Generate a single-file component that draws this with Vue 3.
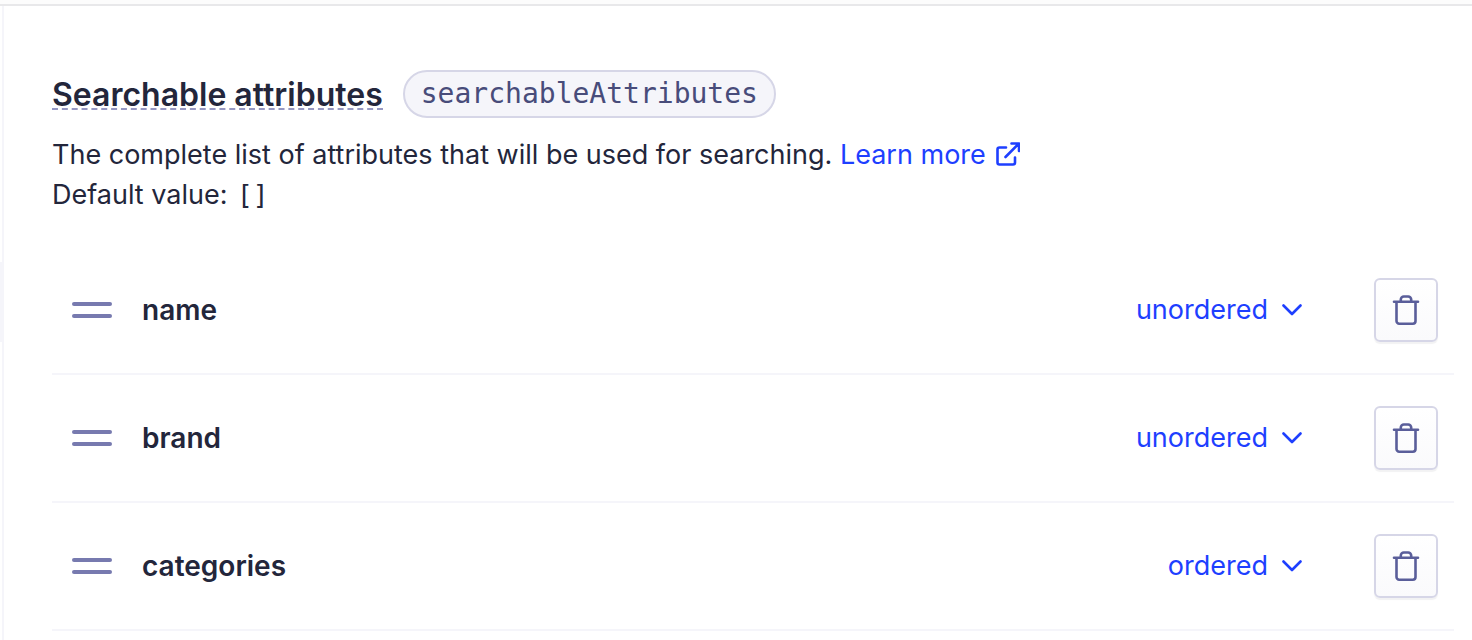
<script setup>
import { ref } from 'vue'

const attributes = ref([
  { name: 'name', order: 'unordered' },
  { name: 'brand', order: 'unordered' },
  { name: 'categories', order: 'ordered' },
])

function remove(index) {
  attributes.value.splice(index, 1)
}
</script>

<template>
  <div class="page">
    <div class="topbar"></div>
    <div class="body">
      <div class="rail"><div class="rail-active"></div></div>
      <main class="panel">
        <header class="heading">
          <h2 class="title">Searchable attributes</h2>
          <code class="pill">searchableAttributes</code>
        </header>
        <p class="description">
          The complete list of attributes that will be used for searching.
          <a class="link" href="#learn-more">Learn more<svg class="external" viewBox="0 0 24 24" aria-hidden="true">
            <path d="M10 5.500H3.500a2 2 0 0 0-2 2v13a2 2 0 0 0 2 2h13.500a2 2 0 0 0 2-2V15.500M15.500 1.500h7.500v7.500M22.500 2 9.500 15" />
          </svg></a>
        </p>
        <p class="description">Default value: <code class="value">[]</code></p>

        <ul class="list">
          <li v-for="(attribute, index) in attributes" :key="attribute.name" class="row">
            <button class="handle" type="button" :aria-label="`Move ${attribute.name}`">
              <span class="bar"></span>
              <span class="bar"></span>
            </button>
            <label class="name" :for="`order-${attribute.name}`">{{ attribute.name }}</label>
            <div class="order">
              <select :id="`order-${attribute.name}`" v-model="attribute.order" class="select">
                <option>unordered</option>
                <option>ordered</option>
              </select>
              <svg class="chevron" viewBox="0 0 20 12" aria-hidden="true"><path d="m1.500 1.500 8.500 8.500 8.500-8.500" /></svg>
            </div>
            <button class="delete" type="button" :aria-label="`Delete ${attribute.name}`" @click="remove(index)">
              <svg class="trash" viewBox="0 0 28 32" aria-hidden="true">
                <path d="M2 7.800h24M4.500 7.800V27a2.700 2.700 0 0 0 2.700 2.700h13.600a2.700 2.700 0 0 0 2.700-2.700V7.800M8.800 7V5.500a3 3 0 0 1 3-3h4.400a3 3 0 0 1 3 3V7" />
              </svg>
            </button>
          </li>
        </ul>
      </main>
    </div>
  </div>
</template>

<style>
body {
  background: #fff;
}
</style>

<style scoped>
.page {
  display: flex;
  flex-direction: column;
  min-height: 100vh;
  box-sizing: border-box;
  font-family: Inter, "Liberation Sans", sans-serif;
  font-size: 27px;
  line-height: 40px;
  color: #23263b;
}
.topbar {
  height: 4px;
  background: #fcfcfc;
  border-bottom: 2px solid #e8e8ea;
}
.body {
  display: flex;
  flex: 1;
}
.rail {
  width: 2px;
  padding-top: 256px;
  border-right: 2px solid #f5f5fa;
}
.rail-active {
  height: 80px;
  background: #f5f5fa;
}
.panel {
  flex: 1;
  min-width: 0;
  padding: 64px 18px 0 48px;
}
.heading {
  display: flex;
  align-items: center;
  gap: 20px;
  margin-bottom: 17px;
}
.title {
  margin: 4px 0 0;
  border-bottom: 2px dashed #9698c3;
  font-size: 32px;
  font-weight: 600;
  line-height: 26px;
}
.pill {
  box-sizing: border-box;
  height: 48px;
  padding: 0 16px;
  border: 2px solid #d6d6e7;
  border-radius: 24px;
  background: #f5f5fa;
  color: #484c7a;
  font-family: "DejaVu Sans Mono", monospace;
  font-size: 28px;
  line-height: 44px;
}
.description {
  margin: 0;
}
.value {
  margin-left: 2px;
  font-family: "DejaVu Sans Mono", monospace;
  font-size: 26px;
  line-height: 28px;
}
.link {
  color: #1e3fff;
  text-decoration: none;
}
.external {
  width: 24px;
  height: 24px;
  margin-left: 10px;
  vertical-align: -2px;
}
.external path,
.chevron path,
.trash path {
  fill: none;
  stroke: currentColor;
  stroke-width: 2.6;
  stroke-linecap: round;
  stroke-linejoin: round;
}
.list {
  margin: 32px 0 0;
  padding: 0;
  list-style: none;
}
.row {
  display: flex;
  align-items: center;
  box-sizing: border-box;
  height: 128px;
  padding: 0 16px 0 20px;
  border-bottom: 2px solid #f5f5fa;
}
.handle {
  display: flex;
  flex-direction: column;
  gap: 8px;
  width: 40px;
  padding: 0;
  border: 0;
  background: none;
  cursor: grab;
}
.bar {
  height: 4px;
  border-radius: 2px;
  background: #777aaf;
}
.name {
  flex: 1;
  margin-left: 30px;
  font-size: 28px;
  font-weight: 600;
}
.order {
  display: grid;
  align-items: center;
  margin-right: 72px;
  color: #1e3fff;
}
.select {
  grid-area: 1 / 1;
  appearance: none;
  margin: 0;
  padding: 0 34px 0 0;
  border: 0;
  background: none;
  color: inherit;
  font: inherit;
  text-align-last: right;
  cursor: pointer;
}
.chevron {
  grid-area: 1 / 1;
  justify-self: end;
  width: 20px;
  height: 12px;
  pointer-events: none;
}
.delete {
  display: flex;
  align-items: center;
  justify-content: center;
  width: 64px;
  height: 64px;
  padding: 0;
  border: 2px solid #d6d6e7;
  border-radius: 6px;
  background: linear-gradient(#fff, #fafafc);
  box-shadow: 0 2px 1px rgba(35, 38, 59, 0.06);
  color: #5a5e9a;
  cursor: pointer;
}
.trash {
  width: 28px;
  height: 32px;
}
</style>
